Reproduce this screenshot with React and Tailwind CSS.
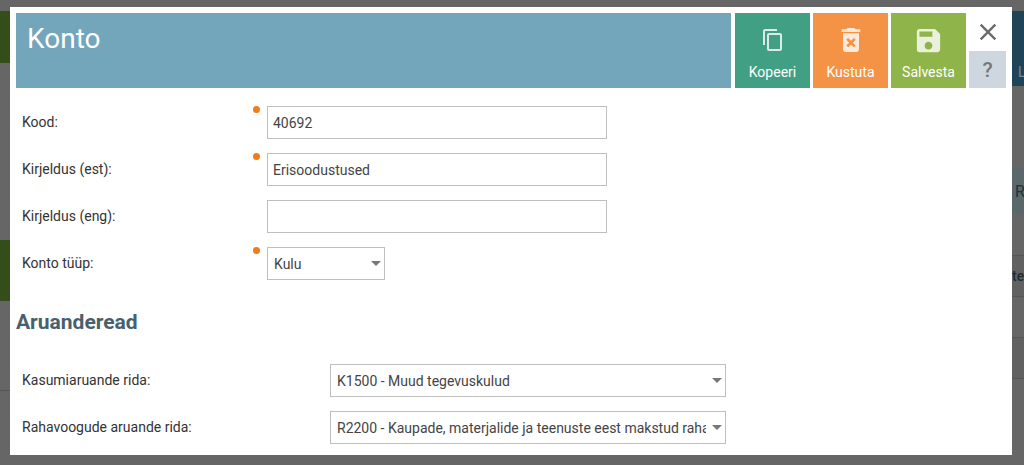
import { useState } from "react";
import { MdClose, MdContentCopy, MdDeleteForever, MdSave } from "react-icons/md";

const CASH_FLOW_LINE =
  "R2200 - Kaupade, materjalide ja teenuste eest makstud raha";

function ActionButton({ label, color, children }) {
  return (
    <button
      type="button"
      className={`flex w-[75px] flex-col items-center pt-[11px] text-sm text-white ${color}`}
    >
      <span className="flex h-8 items-center text-white/80">{children}</span>
      <span className="mt-[6px] leading-5">{label}</span>
    </button>
  );
}

function Row({ id, label, required, wide, children }) {
  return (
    <div className="flex h-8">
      <label
        htmlFor={id}
        className={`flex shrink-0 items-center text-sm text-[#333] ${
          wide ? "w-[308px]" : "w-[231px]"
        }`}
      >
        {label}
      </label>
      {!wide && (
        <span
          className={`mr-[7px] size-[7px] shrink-0 rounded-full ${
            required ? "bg-[#f07c1b]" : ""
          }`}
        />
      )}
      {children}
    </div>
  );
}

function TextBox({ id, value, onChange }) {
  return (
    <input
      id={id}
      type="text"
      value={value}
      onChange={(e) => onChange(e.target.value)}
      className="h-[33px] w-[340px] border border-[#bfbfbf] bg-white px-[5px] text-sm text-[#444] outline-none"
    />
  );
}

function SelectBox({ id, options, width }) {
  return (
    <div className={`relative h-[33px] ${width}`}>
      <select
        id={id}
        className="h-full w-full appearance-none border border-[#bfbfbf] bg-white pr-[19px] pl-[6px] text-sm text-[#444] outline-none"
      >
        {options.map((opt) => (
          <option key={opt}>{opt}</option>
        ))}
      </select>
      <svg
        viewBox="0 0 10 5"
        className="pointer-events-none absolute top-[14px] right-1 h-[5px] w-[10px] fill-[#777]"
      >
        <path d="M0 0h10L5 5z" />
      </svg>
    </div>
  );
}

// Dimmed page behind the dialog
function Background() {
  return (
    <div className="flex h-screen justify-between overflow-hidden bg-[#666]">
      <div className="w-[10px] pt-[11px]">
        <div className="h-[52px] bg-[#344d1b]" />
        <div className="mt-[177px] h-[61px] bg-[#344d1b]" />
        <div className="mt-[89px] border-t border-[#555]" />
      </div>
      <div className="w-3 pt-[11px] text-sm whitespace-nowrap">
        <div className="flex h-[75px] items-end bg-[#1f4357] pb-1 pl-[6px] text-[#7b8a93]">
          L
        </div>
        <div className="mt-[82px] flex h-[46px] items-center bg-[#5a676b] pt-[2px] pl-[3px] text-base text-[#222f36]">
          R
        </div>
        <div className="mt-[41px] flex h-[42px] items-center border-y border-[#555] bg-[#616161] font-medium text-[#1e2c36]">
          te
        </div>
        <div className="h-[41px] border-b border-[#555]" />
        <div className="h-[41px] border-b border-[#555] bg-[#616161]" />
      </div>
    </div>
  );
}

function App() {
  const [code, setCode] = useState("40692");
  const [nameEst, setNameEst] = useState("Erisoodustused");
  const [nameEng, setNameEng] = useState("");

  return (
    <div className="font-['Roboto',sans-serif]">
      <Background />
      <div className="fixed inset-0 overflow-y-auto pt-[7px] pr-3 pl-[10px]">
        <form
          role="dialog"
          aria-labelledby="dialog-title"
          className="bg-white px-[6px] pt-[6px] pb-3"
        >
          <header className="flex h-[75px]">
            <h1
              id="dialog-title"
              className="mr-1 flex-1 bg-[#73a6bb] px-[11px] pt-2 text-[28px] leading-9 text-white"
            >
              Konto
            </h1>
            <div className="flex gap-[3px]">
              <ActionButton label="Kopeeri" color="bg-[#41a083]">
                <MdContentCopy size={24} />
              </ActionButton>
              <ActionButton label="Kustuta" color="bg-[#f49245]">
                <MdDeleteForever size={32} />
              </ActionButton>
              <ActionButton label="Salvesta" color="bg-[#8fb44a]">
                <MdSave size={31} />
              </ActionButton>
              <div className="flex w-[37px] flex-col">
                <button
                  type="button"
                  aria-label="Sulge"
                  className="flex h-[38px] items-center justify-center text-[#6b6b6b]"
                >
                  <MdClose size={28} />
                </button>
                <button
                  type="button"
                  className="flex-1 bg-[#ced7df] text-[21px] leading-6 font-medium text-[#777]"
                >
                  ?
                </button>
              </div>
            </div>
          </header>

          <div className="mt-[18px] flex flex-col gap-[15px] pl-[6px]">
            <Row id="code" label="Kood:" required>
              <TextBox id="code" value={code} onChange={setCode} />
            </Row>
            <Row id="name-est" label="Kirjeldus (est):" required>
              <TextBox id="name-est" value={nameEst} onChange={setNameEst} />
            </Row>
            <Row id="name-eng" label="Kirjeldus (eng):">
              <TextBox id="name-eng" value={nameEng} onChange={setNameEng} />
            </Row>
            <Row id="type" label="Konto tüüp:" required>
              <SelectBox id="type" options={["Kulu"]} width="w-[118px]" />
            </Row>
          </div>

          <h2 className="mt-[29px] text-[21px] leading-7 font-bold text-[#47606d]">
            Aruanderead
          </h2>

          <div className="mt-7 flex flex-col gap-[15px] pl-[6px]">
            <Row id="income-line" label="Kasumiaruande rida:" wide>
              <SelectBox
                id="income-line"
                options={["K1500 - Muud tegevuskulud"]}
                width="w-[396px]"
              />
            </Row>
            <Row id="cash-line" label="Rahavoogude aruande rida:" wide>
              <SelectBox
                id="cash-line"
                options={[CASH_FLOW_LINE]}
                width="w-[396px]"
              />
            </Row>
          </div>
        </form>
      </div>
    </div>
  );
}

export default App;
